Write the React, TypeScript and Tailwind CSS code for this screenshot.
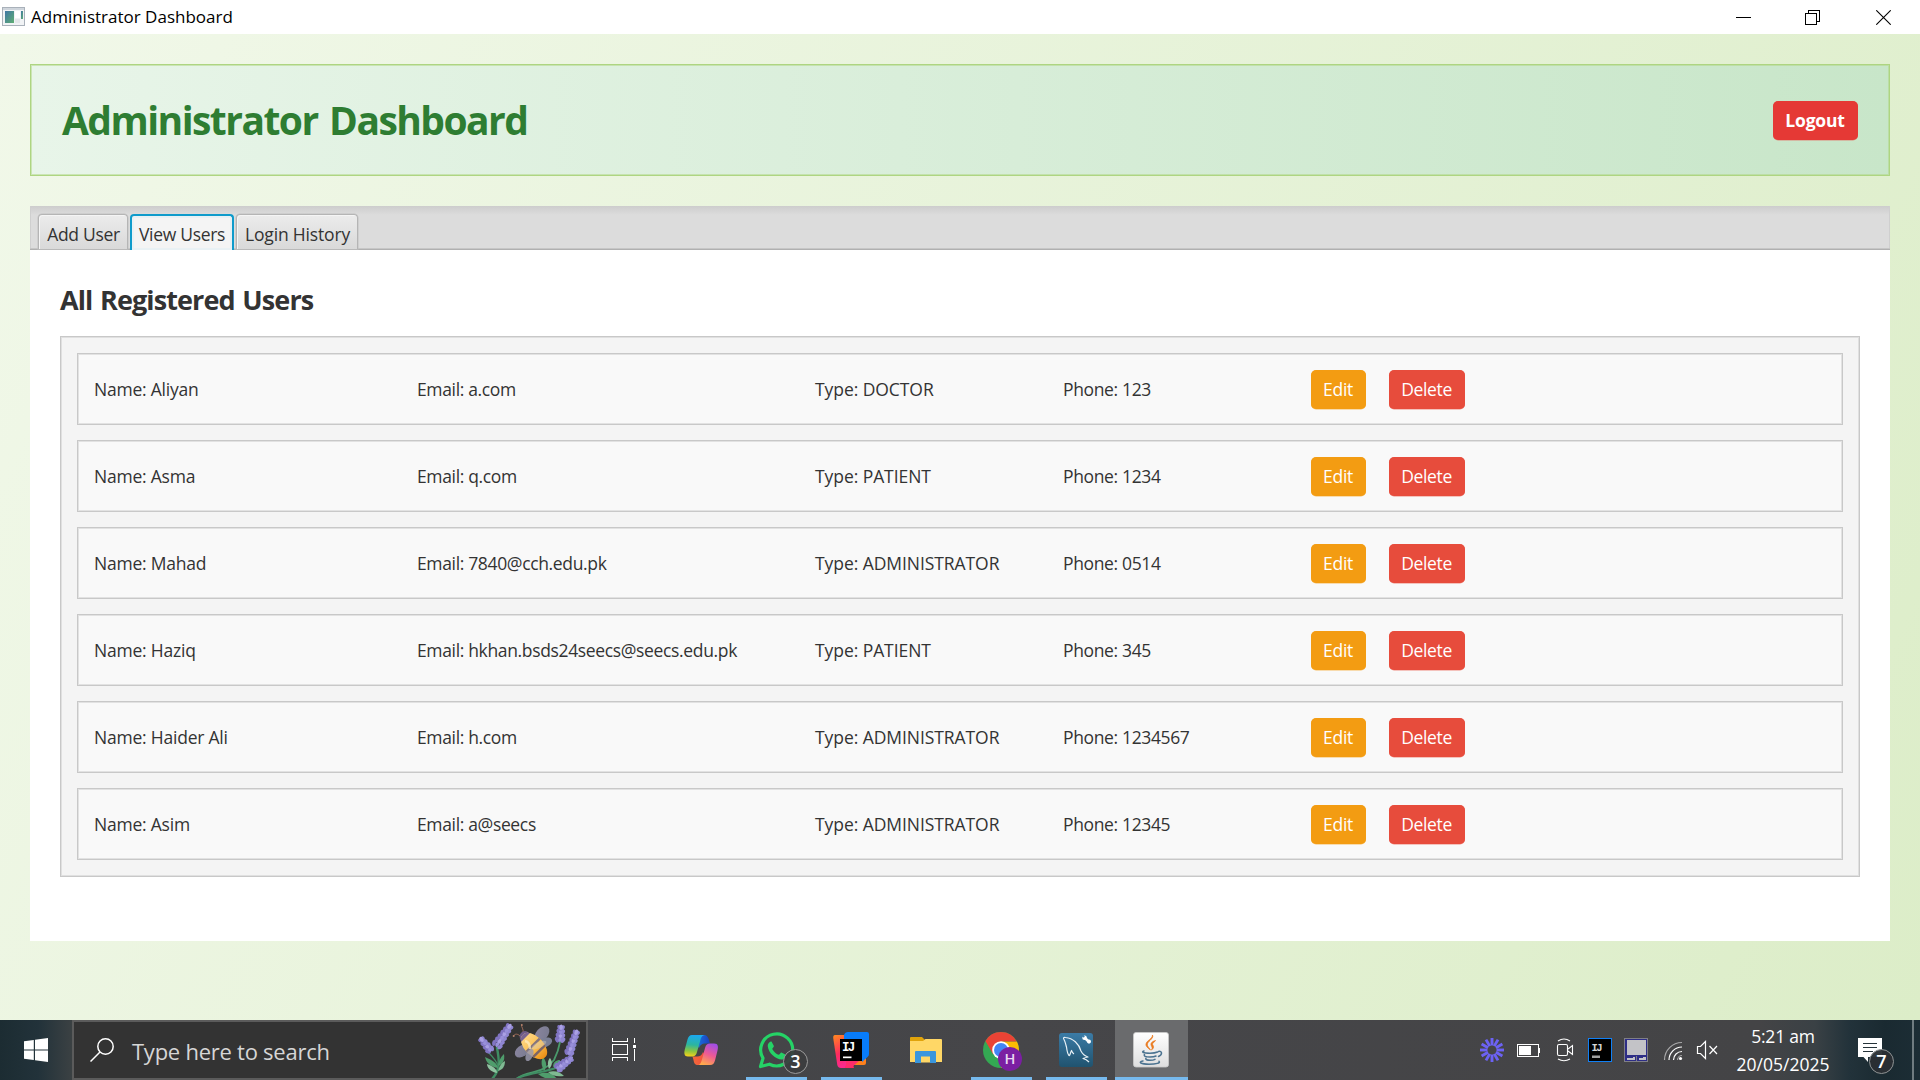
import React from "react";

type User = { name: string; email: string; type: string; phone: string };

const users: User[] = [
  { name: "Aliyan", email: "a.com", type: "DOCTOR", phone: "123" },
  { name: "Asma", email: "q.com", type: "PATIENT", phone: "1234" },
  { name: "Mahad", email: "7840@cch.edu.pk", type: "ADMINISTRATOR", phone: "0514" },
  { name: "Haziq", email: "hkhan.bsds24seecs@seecs.edu.pk", type: "PATIENT", phone: "345" },
  { name: "Haider Ali", email: "h.com", type: "ADMINISTRATOR", phone: "1234567" },
  { name: "Asim", email: "a@seecs", type: "ADMINISTRATOR", phone: "12345" },
];

function TitleBar() {
  return (
    <div className="flex h-[34px] shrink-0 items-center bg-white">
      <svg className="ml-[2px] h-6 w-[23px]" viewBox="0 0 23 24" shapeRendering="crispEdges">
        <defs>
          <linearGradient id="app" x1="0" y1="0" x2="1" y2="1">
            <stop offset="0" stopColor="#3f76a5" />
            <stop offset="1" stopColor="#5fae72" />
          </linearGradient>
        </defs>
        <rect x="0.5" y="2.5" width="22" height="18" fill="#f1f3f5" stroke="#a9b1ba" />
        <rect x="1" y="3" width="21" height="2" fill="#cfd5dc" />
        <rect x="3" y="6" width="9" height="12" fill="url(#app)" />
        <rect x="13" y="6" width="5" height="7" fill="#fff" />
        <rect x="13" y="14" width="5" height="4" fill="#e4e7ea" />
        <rect x="19" y="6" width="2" height="8" fill="url(#app)" />
      </svg>
      <span className="ml-[6px] pb-px text-[17px] leading-none text-black">Administrator Dashboard</span>
      <div className="ml-auto flex items-center text-black">
        <svg className="mr-[54px] h-[15px] w-[15px]" viewBox="0 0 15 15" shapeRendering="crispEdges">
          <rect y="7" width="15" height="1" fill="currentColor" />
        </svg>
        <svg className="mr-[56px] h-[15px] w-[15px]" viewBox="0 0 15 15" fill="none" stroke="currentColor" shapeRendering="crispEdges">
          <rect x="0.5" y="3.5" width="11" height="11" />
          <path d="M3.5 3.5V0.5H14.5V11.5H11.5" />
        </svg>
        <svg className="mr-[29px] h-[15px] w-[15px]" viewBox="0 0 15 15" fill="none" stroke="currentColor" strokeWidth="1.1">
          <path d="M0.3 0.3L14.7 14.7M14.7 0.3L0.3 14.7" />
        </svg>
      </div>
    </div>
  );
}

function Header() {
  return (
    <header className="flex h-[112px] shrink-0 items-center justify-between border border-[#aed581] bg-linear-to-r from-[#e8f5e9] to-[#c8e6c9] pr-[31px] pl-[31px] shadow-[inset_0_0_0_1px_rgba(174,213,129,0.5)]">
      <h1 className="pb-[2px] text-[39px] leading-none font-bold tracking-[-1.55px] text-[#2e7d32] [word-spacing:3px]">Administrator Dashboard</h1>
      <button className="mt-px flex h-[39px] w-[85px] items-center justify-center rounded-[5px] bg-[#e53935] pr-px text-[17.5px] font-bold tracking-[-0.2px] text-white shadow-[0_0.5px_0_0_#df8a7c]">
        Logout
      </button>
    </header>
  );
}

function Tabs() {
  const idle =
    "flex h-[35px] items-center justify-center rounded-t-[4px] border border-b-0 border-[#b5b5b5] bg-linear-to-b from-[#ececec] to-[#d9d9d9] pt-[5px] pl-px shadow-[inset_1px_1px_0_0_#f5f5f5,0_0_0_0.5px_#c2c2c2]";
  return (
    <div className="flex h-[44px] shrink-0 items-end gap-[2px] border-b border-[#b0b0b0] bg-[linear-gradient(to_bottom,#cdcdcd_0px,#dcdcdc_9px)] pl-2 text-[17.5px] leading-none text-[#333] shadow-[inset_0_-1px_0_0_#c6c6c6,inset_1px_0_0_0_#cfcfcf,inset_-1px_0_0_0_#cfcfcf]">
      <div className={idle + " w-[90px] tracking-[-0.3px]"}>Add User</div>
      <div className="-mb-px flex h-[36px] w-[104px] items-center justify-center rounded-t-[4px] border-2 border-b-0 border-[#0f9bcb] bg-[#f4f4f4] pt-[3px] tracking-[-0.3px] shadow-[inset_0_0_0_2px_#e9f1f4]">
        View Users
      </div>
      <div className={idle + " w-[122px] tracking-[-0.17px]"}>Login History</div>
    </div>
  );
}

function UserRow({ user }: { user: User }) {
  return (
    <div className="flex h-[72px] items-center border border-[#c8c8c8] bg-[#f9f9f9] pt-[2px] pl-4 text-[17.5px] leading-none whitespace-nowrap text-[#333] shadow-[inset_0_0_0_1px_#e2e2e2]">
      <div className="w-[323px] tracking-[-0.22px]">Name: {user.name}</div>
      <div className="w-[398px] tracking-[-0.35px]">Email: {user.email}</div>
      <div className="w-[248px] tracking-[-0.07px]">Type: {user.type}</div>
      <div className="w-[248px] tracking-[-0.36px]">Phone: {user.phone}</div>
      <button className="-mt-px flex h-[39px] w-[55px] items-center justify-center rounded-[5px] bg-[#f39c12] pr-px tracking-[-0.3px] text-white shadow-[0_0.5px_0_0_#f7bd62]">
        Edit
      </button>
      <button className="-mt-px ml-[23px] flex h-[39px] w-[76px] items-center justify-center rounded-[5px] bg-[#e74c3c] pr-px tracking-[-0.35px] text-white shadow-[0_0.5px_0_0_#ef8b80]">
        Delete
      </button>
    </div>
  );
}

/* A lavender flower head: buds in alternating pairs from base (x1,y1) to tip (x2,y2). */
function Lavender({ x1, y1, x2, y2, n, w }: { x1: number; y1: number; x2: number; y2: number; n: number; w: number }) {
  const a = (Math.atan2(y2 - y1, x2 - x1) * 180) / Math.PI;
  const len = Math.hypot(x2 - x1, y2 - y1);
  return (
    <g transform={`translate(${x1} ${y1}) rotate(${a})`}>
      {Array.from({ length: n }, (_, i) => {
        const t = i / (n - 1);
        const x = t * len;
        const s = w * (1 - t * 0.5);
        return (
          <g key={i}>
            <ellipse cx={x} cy={-s} rx={3} ry={1.9} fill="#8074c2" transform={`rotate(-28 ${x} ${-s})`} />
            <ellipse cx={x} cy={s} rx={3} ry={1.9} fill="#8f86d2" transform={`rotate(28 ${x} ${s})`} />
            <ellipse cx={x + 0.8} cy={0} rx={2.8} ry={1.8} fill={i % 2 ? "#aaa0e4" : "#988fda"} />
          </g>
        );
      })}
    </g>
  );
}

function BeeArt() {
  return (
    <svg className="ml-auto h-14 w-[116px]" viewBox="0 4 116 56">
      <defs>
        <linearGradient id="wing" x1="0" y1="0" x2="1" y2="1">
          <stop offset="0" stopColor="#8b86a0" />
          <stop offset="1" stopColor="#77798e" />
        </linearGradient>
        <linearGradient id="bee" x1="0" y1="0" x2="1" y2="0">
          <stop offset="0" stopColor="#ffd98a" />
          <stop offset="0.55" stopColor="#fbc052" />
          <stop offset="1" stopColor="#ea8d13" />
        </linearGradient>
        <clipPath id="body">
          <ellipse cx="0" cy="0" rx="16" ry="9.5" />
        </clipPath>
      </defs>
      <g fill="none" strokeLinecap="round">
        <path d="M27 30C29 40 31 52 22 61" stroke="#3f8d63" strokeWidth="2.4" />
        <path d="M18 34C22 38 27 43 29 50" stroke="#3f8d63" strokeWidth="1.3" />
        <path d="M46 61C58 52 72 57 84 42C87 36 89 30 90 24" stroke="#4a9a6b" strokeWidth="1.8" />
        <path d="M48 60C62 54 74 55 88 49" stroke="#3f8d63" strokeWidth="2" />
      </g>
      <g fill="#4f9d6c">
        <path d="M28 50C20 49 16 44 15 39C22 42 27 45 28 50Z" />
        <path d="M27 55C20 54 17 49 17 46C23 48 27 51 27 55Z" fill="#8fc3a0" />
        <path d="M28 48C29 41 32 38 34 36C35 42 33 46 28 48Z" />
        <path d="M28 53C30 46 33 44 35 43C35 49 32 52 28 53Z" fill="#7fba92" />
        <path d="M74 53C71 47 71 43 73 39C77 44 77 49 74 53Z" />
        <path d="M79 51C77 46 78 42 80 40C83 44 82 48 79 51Z" fill="#8fc3a0" />
        <path d="M83 49C83 44 86 42 90 42C89 46 87 48 83 49Z" />
        <path d="M68 56C77 53 83 55 88 62C79 62 73 60 68 56Z" />
        <path d="M78 54C85 52 90 54 94 58C87 59 82 58 78 54Z" fill="#7fba92" />
      </g>
      <Lavender x1={27} y1={27} x2={39} y2={9} n={6} w={3.6} />
      <Lavender x1={20} y1={32} x2={12} y2={22} n={4} w={2.6} />
      <Lavender x1={90} y1={22} x2={91} y2={10} n={4} w={3} />
      <Lavender x1={99} y1={35} x2={106} y2={15} n={6} w={2.8} />
      <Lavender x1={88} y1={50} x2={100} y2={41} n={5} w={3} />
      <path d="M50 18C47 15 44 16 43.500 18.500M53 15C54 11 51 9 51.500 6.500" stroke="#9c6a58" strokeWidth="1" fill="none" />
      <circle cx="43.700" cy="18" r="1" fill="#b3816b" />
      <circle cx="51.800" cy="7" r="1" fill="#b3816b" />
      <ellipse cx="72" cy="16" rx="9" ry="5.800" transform="rotate(-48 72 16)" fill="url(#wing)" />
      <ellipse cx="75" cy="24.500" rx="7.500" ry="4.600" transform="rotate(-22 75 24.500)" fill="#7a7f95" />
      <ellipse cx="52" cy="33" rx="8" ry="5.500" transform="rotate(-38 52 33)" fill="url(#wing)" />
      <circle cx="55" cy="18.500" r="5.400" fill="#6d5a88" />
      <g transform="translate(64 28) rotate(45)">
        <g clipPath="url(#body)">
          <rect x="-16" y="-10" width="32" height="20" fill="url(#bee)" />
          <rect x="-16" y="-10" width="4" height="20" fill="#7a6490" />
          <rect x="-2.500" y="-10" width="2.500" height="20" fill="#85757c" />
          <rect x="6" y="-10" width="2.500" height="20" fill="#7d6566" />
        </g>
      </g>
      <ellipse cx="59.500" cy="37" rx="6.500" ry="3.400" transform="rotate(-65 59.500 37)" fill="#9a99ad" opacity="0.85" />
      <ellipse cx="69" cy="27" rx="8" ry="3" transform="rotate(-25 69 27)" fill="#d9d3c4" opacity="0.4" />
      <path d="M55 23Q60 24 60 31" stroke="#fff0c5" strokeWidth="2.500" fill="none" opacity="0.7" />
    </svg>
  );
}

function Slot({ running, active, children }: { running?: boolean; active?: boolean; children: React.ReactNode }) {
  return (
    <div className="relative flex h-[60px] w-[75px] justify-center">
      {active && <div className="absolute inset-x-px inset-y-0 bg-[#6a6b6d]" />}
      <svg className="relative h-[60px] w-[75px]" viewBox="0 0 75 60">
        {children}
      </svg>
      {running && <div className={"absolute bottom-0 h-[3px] bg-[#76b9ed] " + (active ? "w-[73px]" : "w-[61px]")} />}
    </div>
  );
}

function TaskIcons() {
  return (
    <div className="ml-px flex">
      <Slot>
        <g fill="none" stroke="#fff" strokeWidth="1.2" shapeRendering="crispEdges">
          <path d="M23.500 18V21.500H38.500V18M23.500 41V37.500H38.500V41" />
          <rect x="23.500" y="24.500" width="15" height="10" />
          <path d="M45.500 18V23M45.500 29V41" />
        </g>
        <rect x="44" y="25" width="3" height="3" fill="#fff" />
      </Slot>
      <Slot>
        <defs>
          <linearGradient id="cp1" x1="0.4" y1="0" x2="0.3" y2="1">
            <stop offset="0" stopColor="#1ba8f0" />
            <stop offset="0.45" stopColor="#2bb5a0" />
            <stop offset="0.75" stopColor="#8cc63f" />
            <stop offset="1" stopColor="#f5d21c" />
          </linearGradient>
          <linearGradient id="cp2" x1="0.7" y1="0" x2="0.3" y2="1">
            <stop offset="0" stopColor="#a24ee6" />
            <stop offset="0.5" stopColor="#ee5a94" />
            <stop offset="1" stopColor="#ffab4a" />
          </linearGradient>
          <linearGradient id="cp3" x1="0" y1="0" x2="1" y2="0">
            <stop offset="0" stopColor="#1a7fe8" />
            <stop offset="1" stopColor="#1c3fbd" />
          </linearGradient>
          <linearGradient id="cp4" x1="0" y1="0" x2="1" y2="0">
            <stop offset="0" stopColor="#f26a3a" />
            <stop offset="1" stopColor="#f2493f" />
          </linearGradient>
        </defs>
        <path d="M32 15H40C43 15 44 17 45 20L46 23.500H41C38 23.500 36 25 35 28L30 20Z" fill="url(#cp3)" />
        <path d="M41 45H34C31 45 30 43 29.500 40L28.500 36.500H33C36 36.500 38 35 39 32L44 40Z" fill="url(#cp4)" />
        <path d="M28 15H41C37.500 15.500 37 18 36.300 20.500L33 32C32 35.500 30.500 36.500 28 36.500H24C20 36.500 20 33 20.800 29.500L23.500 19.500C24.500 16.500 25.500 15 28 15Z" fill="url(#cp1)" />
        <path d="M46 45H34.500C36.500 44.500 37.200 42 38 39.500L41 28C42 24.500 43.500 23.500 46 23.500H50C54.500 23.500 54.300 27 53.500 30.500L51 40.500C50 43.500 49 45 46 45Z" fill="url(#cp2)" />
      </Slot>
      <Slot running>
        <path d="M21.500 46.500L24 38.200A16 16 0 1 1 30.500 44.200Z" fill="none" stroke="#25d366" strokeWidth="3.200" strokeLinejoin="round" />
        <path d="M32.500 21.500C31 21.500 28.500 23 28.800 26.500C29.500 33 37 40 43.500 39.500C46.500 39 47.500 36.500 47.200 35L42.500 32.500C41.500 32.500 41 34.500 39.800 34.800C37.500 34.500 33.500 30.500 33.300 28.800C33.500 28 35 27 34.900 26Z" fill="#25d366" />
        <circle cx="56.500" cy="41.500" r="12" fill="#3b3c3e" fillOpacity="0.93" stroke="#9b9b9b" />
        <text x="56.500" y="47.500" fontSize="18" fontWeight="600" fill="#fff" textAnchor="middle">3</text>
      </Slot>
      <Slot running>
        <defs>
          <linearGradient id="ij" x1="0" y1="0" x2="0.3" y2="1">
            <stop offset="0" stopColor="#ff8a1f" />
            <stop offset="0.6" stopColor="#fe2a5f" />
            <stop offset="1" stopColor="#fb2a8d" />
          </linearGradient>
        </defs>
        <path d="M40 26H52V43Q52 45 50 45H40Z" fill="#fc801d" />
        <path d="M21 15H38V48H27Q24 48 23.300 45L19.200 18Q19 15 21 15Z" fill="url(#ij)" />
        <path d="M36 32L40 48H31Z" fill="#fe2a5f" />
        <path d="M38 47L45 41H32V48Z" fill="#fd2c6b" />
        <path d="M34 12H53Q55 12 55 14V34Q55 35.500 54 36.500L48 42V19H30V15Q31 12 34 12Z" fill="#087cfa" />
        <rect x="26" y="19" width="22" height="22" fill="#000" />
        <text x="28" y="30.500" fontSize="12.500" fontWeight="700" fill="#fff" fontFamily="Liberation Mono, monospace" letterSpacing="-1.700">IJ</text>
        <rect x="29" y="36.500" width="8.500" height="1.700" fill="#fff" />
      </Slot>
      <Slot>
        <path d="M21 18Q21 17 22 17H33L36 20V25H21Z" fill="#e0a30b" />
        <path d="M21 21H34L36.500 19H52Q53 19 53 20V42H21Z" fill="#ffd766" />
        <path d="M26 32Q26 31 27 31H46Q47 31 47 32V43H41V37H32V43H26Z" fill="#3a96dd" />
        <rect x="32" y="36.500" width="9" height="6" fill="#ffd766" />
      </Slot>
      <Slot running>
        <circle cx="37" cy="30" r="18" fill="#34a853" />
        <path d="M37 21.500H52.800A18 18 0 0 1 37 48L45 34Z" fill="#fbbc04" />
        <path d="M37 12A18 18 0 0 0 21.400 21L29.200 34.500L37 21.500H52.800A18 18 0 0 0 37 12Z" fill="#ea4335" />
        <circle cx="37" cy="30" r="8.800" fill="#fff" />
        <circle cx="37" cy="30" r="7" fill="#4285f4" />
        <circle cx="46" cy="39" r="12" fill="#7b1fa2" />
        <text x="46" y="44.200" fontSize="14.500" fontWeight="600" fill="#ead8f1" textAnchor="middle">H</text>
      </Slot>
      <Slot running>
        <defs>
          <linearGradient id="my" x1="0" y1="0" x2="0" y2="1">
            <stop offset="0" stopColor="#3b7ba6" />
            <stop offset="1" stopColor="#20536f" />
          </linearGradient>
        </defs>
        <rect x="20" y="13" width="34" height="34" rx="3" fill="url(#my)" />
        <path d="M50 42C48 40 46 39 44 38.500C46.500 37.500 49 37 49 37C46 36 43.500 34 42 31C40 24 34 18 26.500 17.500C24.500 17 24 18 25 19.500C26.500 22 26.500 24 27.500 27C28 31 28.500 34 30 35.500C31 36 31.500 32 32.500 30.500C33 32 34 33.500 35 34" fill="none" stroke="#e8f1f6" strokeWidth="1.200" strokeLinejoin="round" />
        <path d="M45 17L50 22" stroke="#fff" strokeWidth="2.600" strokeLinecap="round" />
        <circle cx="45.500" cy="17.800" r="2.300" fill="#fff" />
        <circle cx="44.300" cy="16.200" r="1.200" fill="#3b7ba6" />
        <circle cx="50" cy="21.500" r="2" fill="#fff" />
      </Slot>
      <Slot running active>
        <defs>
          <linearGradient id="jv" x1="0" y1="0" x2="0" y2="1">
            <stop offset="0" stopColor="#ffffff" />
            <stop offset="1" stopColor="#dedede" />
          </linearGradient>
        </defs>
        <rect x="19.500" y="12.500" width="35" height="34.500" rx="2.500" fill="url(#jv)" stroke="#cacaca" strokeWidth="0.800" />
        <path d="M38.500 15C40.500 19 32 21.500 33.500 25.500C34 27.500 36 28.500 36.500 30C34.500 28.500 31.500 26.500 32 24C32.500 20.500 38.500 19 38.500 15ZM41.500 20.500C38 21.500 36.500 23 37 25C37.500 26.500 39 27.500 37.500 30C41.500 27 38.500 25.500 38.500 24C38.500 22.500 41.500 21.500 41.500 20.500Z" fill="#ea7a1f" stroke="#ea7a1f" strokeWidth="0.700" />
        <g fill="none" stroke="#4b7390" strokeWidth="1.500" strokeLinecap="round">
          <path d="M30 31C27 32 29 33.200 36 33.200C39 33.200 42 32.700 43.500 32" />
          <path d="M30.500 34.500C29.500 36 31.500 37 36 37C38.500 37 41 36.500 42 36" />
          <path d="M32 38.200C31 39.500 33 40.300 36 40.300C38.500 40.300 40 39.900 41 39.300" />
          <path d="M44.500 31.500C48 30.500 49 34.500 44.500 36.500" />
          <path d="M29 41C23.500 42 27 44.200 35 44.200C42 44.200 47 43 45 41.200" />
        </g>
      </Slot>
    </div>
  );
}

function Tray() {
  return (
    <svg className="h-[60px] w-[250px] shrink-0" viewBox="1475 1020 250 60">
      <g stroke="#6c62f4" strokeWidth="2.900">
        {Array.from({ length: 12 }, (_, i) => (
          <line key={i} x1="1492" y1="1038" x2="1492" y2="1045.500" transform={`rotate(${i * 30} 1492 1050)`} />
        ))}
      </g>
      <g shapeRendering="crispEdges">
        <rect x="1517.500" y="1044.500" width="21" height="12" fill="none" stroke="#fff" />
        <rect x="1539" y="1048" width="1" height="5" fill="#fff" />
        <rect x="1519" y="1046" width="12" height="9" fill="#fff" />
      </g>
      <g fill="none" stroke="#fff" strokeWidth="1.100">
        <rect x="1557.500" y="1044.500" width="10" height="11" rx="1.500" />
        <path d="M1568 1049L1572.500 1045.500V1054.500L1568 1051" />
        <path d="M1558 1041Q1564 1037 1570 1041M1558 1059Q1564 1062.500 1570 1059" />
      </g>
      <rect x="1588.500" y="1038.500" width="23" height="23" fill="#000" stroke="#1180f5" />
      <text x="1591.500" y="1050.500" fontSize="10.500" fontWeight="700" fill="#d4d4d4" fontFamily="Liberation Mono, monospace" letterSpacing="-1.500">IJ</text>
      <rect x="1592" y="1055.500" width="8" height="2.500" fill="#a0a0a0" />
      <g shapeRendering="crispEdges">
        <rect x="1624" y="1038" width="24" height="24" fill="#7f7f86" />
        <rect x="1625" y="1039" width="22" height="17" fill="#2e2e86" />
        <rect x="1627" y="1040" width="19" height="15" fill="#c3c3c7" />
        <rect x="1625" y="1056" width="11" height="5" fill="#2e2e86" />
        <rect x="1637" y="1056" width="10" height="5" fill="#2e2e86" />
        <path d="M1627 1060V1058H1633V1057H1635V1060ZM1639 1060V1058H1643V1057H1646V1060Z" fill="#c3c3c7" />
      </g>
      <g fill="none" stroke="#fff" strokeWidth="1.200">
        <path d="M1664.500 1060A17.500 17.500 0 0 1 1682 1042.500" stroke="#a9a9aa" />
        <path d="M1669 1060A13 13 0 0 1 1682 1047" />
        <path d="M1673.500 1060A8.500 8.500 0 0 1 1682 1051.500" />
        <path d="M1677.500 1060A4.500 4.500 0 0 1 1682 1055.500" strokeOpacity="0.500" />
      </g>
      <circle cx="1680.500" cy="1058.500" r="1.600" fill="#fff" />
      <g fill="none" stroke="#fff" strokeWidth="1.200">
        <path d="M1697.500 1046.500H1700.500L1705.500 1041.500V1058.500L1700.500 1053.500H1697.500Z" />
        <path d="M1709.500 1046L1717 1054M1717 1046L1709.500 1054" />
      </g>
    </svg>
  );
}

function Taskbar() {
  return (
    <div className="flex h-[60px] shrink-0 bg-[linear-gradient(to_right,#1c2c32_0px,#22323a_38px,#3b4143_72px,#434447_560px,#464649_1000px,#444446_1760px,#3a4145_1815px,#22323a_1850px,#1a2a31_1885px,#1c2d35_1920px)]">
      <svg className="h-[60px] w-[72px] shrink-0" viewBox="0 0 72 60" fill="#fff">
        <path d="M24 21.300L33.800 20V29.400H24ZM35 19.800L48 18V29.400H35ZM24 30.600H33.800V40L24 38.700ZM35 30.600H48V42L35 40.200Z" />
      </svg>
      <div className="flex h-[60px] w-[516px] shrink-0 items-center border-2 border-[#5b5b5b] bg-[#333333]">
        <svg className="ml-4 h-6 w-6" viewBox="0 0 24 24" fill="none" stroke="#fff" strokeWidth="1.500">
          <circle cx="15.500" cy="8.500" r="7.700" />
          <path d="M10 14L0.500 23.500" />
        </svg>
        <span className="mt-px ml-[18px] text-[22px] leading-none tracking-[-0.25px] whitespace-nowrap text-[#d6d6d6]">Type here to search</span>
        <BeeArt />
      </div>
      <TaskIcons />
      <div className="flex flex-1 justify-end">
        <Tray />
        <div className="flex w-[116px] flex-col items-center pt-[2px] text-[17.5px] leading-[28px] text-white">
          <span className="tracking-[-0.2px]">5:21 am</span>
          <span>20/05/2025</span>
        </div>
        <svg className="h-[60px] w-[79px] shrink-0" viewBox="1841 1020 79 60">
          <path d="M1858 1038H1882V1057H1868V1062L1863.500 1057H1858Z" fill="#fff" />
          <path d="M1863 1043.500H1877M1863 1047.500H1877M1863 1051.500H1873" stroke="#26343a" strokeWidth="1.100" />
          <circle cx="1881.500" cy="1061.500" r="12" fill="#2a2f33" fillOpacity="0.960" stroke="#8f9394" />
          <text x="1881.500" y="1067.500" fontSize="18" fontWeight="600" fill="#fff" textAnchor="middle">7</text>
          <rect x="1912" y="1020" width="2" height="60" fill="#6f7b80" />
        </svg>
      </div>
    </div>
  );
}

export default function App() {
  return (
    <div className="flex h-[1080px] w-[1920px] flex-col overflow-hidden font-['Open_Sans','Noto_Sans',sans-serif]">
      <TitleBar />
      <main className="flex flex-1 flex-col gap-[30px] bg-[linear-gradient(117deg,#f1f8e9,#dcedc8)] px-[30px] pt-[30px]">
        <Header />
        <section className="flex h-[735px] flex-col bg-white">
          <Tabs />
          <h2 className="mt-[36px] ml-[30px] text-[27px] leading-[27px] font-bold tracking-[-0.9px] text-[#333] [word-spacing:1.5px]">All Registered Users</h2>
          <div className="mx-[30px] mt-[23px] flex flex-col gap-[15px] border border-[#c8c8c8] bg-[#f4f4f4] p-4 shadow-[inset_0_0_0_1px_#e0e0e0]">
            {users.map((u) => (
              <UserRow key={u.name} user={u} />
            ))}
          </div>
        </section>
      </main>
      <Taskbar />
    </div>
  );
}
